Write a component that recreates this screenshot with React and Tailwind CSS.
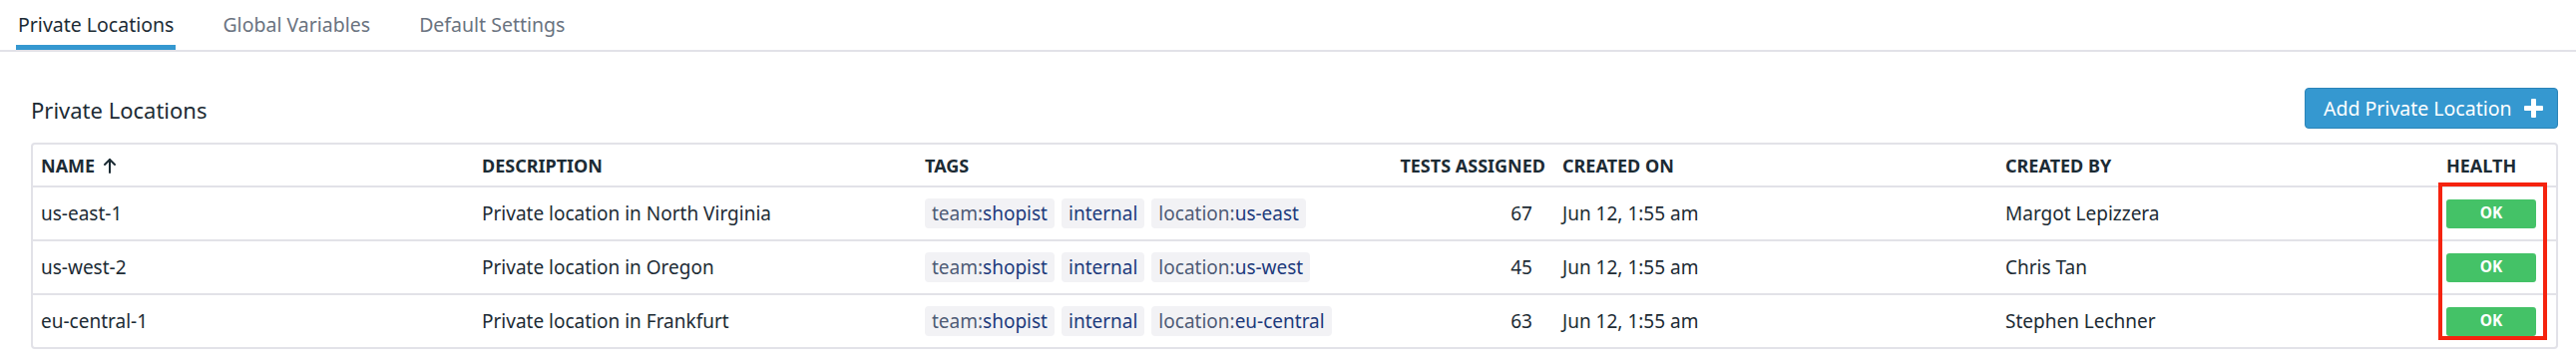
import React from 'react';

const rows = [
  {
    name: 'us-east-1',
    description: 'Private location in North Virginia',
    region: 'us-east',
    tests: 67,
    createdOn: 'Jun 12, 1:55 am',
    createdBy: 'Margot Lepizzera'
  },
  {
    name: 'us-west-2',
    description: 'Private location in Oregon',
    region: 'us-west',
    tests: 45,
    createdOn: 'Jun 12, 1:55 am',
    createdBy: 'Chris Tan'
  },
  {
    name: 'eu-central-1',
    description: 'Private location in Frankfurt',
    region: 'eu-central',
    tests: 63,
    createdOn: 'Jun 12, 1:55 am',
    createdBy: 'Stephen Lechner'
  }
];

const gridCols = 'grid grid-cols-[442px_444px_471px_168px_444px_442px_118px]';

function Tag({ k, v }) {
  return (
    <span className="inline-flex items-center h-[30px] px-[7px] rounded-[4px] bg-[#f2f2f5] text-[19px] leading-none">
      {k && <span className="text-[#4f5c76]">{k}:</span>}
      <span className="text-[#1d3a7c]">{v}</span>
    </span>
  );
}

function PlusIcon() {
  return (
    <svg width="19" height="19" viewBox="0 0 19 19" fill="#ffffff">
      <rect x="7" y="0" width="5" height="19" rx="1" />
      <rect x="0" y="7" width="19" height="5" rx="1" />
    </svg>
  );
}

function SortArrow() {
  return (
    <svg width="14" height="16" viewBox="0 0 14 16" fill="none" stroke="#1c2b34" strokeWidth="2" strokeLinecap="round" strokeLinejoin="round">
      <path d="M7 15V2" />
      <path d="M2 7l5-5 5 5" />
    </svg>
  );
}

function App() {
  return (
    <div className="w-[2582px] h-[362px] bg-white font-['Noto_Sans',sans-serif] text-[#1c2b34] overflow-hidden">
      {/* Tabs */}
      <div className="flex pl-[16px] border-b-2 border-[#e2e2e8]">
        <div className="h-[50px] px-[2px] flex items-center border-b-[5px] border-[#3598d0] pt-[5px] text-[19.5px] text-[#1c2b34]">
          Private Locations
        </div>
        <div className="h-[50px] px-[2px] ml-[45px] flex items-center border-b-[5px] border-transparent pt-[5px] text-[19.5px] text-[#6a7380]">
          Global Variables
        </div>
        <div className="h-[50px] px-[2px] ml-[45px] flex items-center border-b-[5px] border-transparent pt-[5px] text-[19.5px] text-[#6a7380]">
          Default Settings
        </div>
      </div>

      <div className="pl-[31px] pr-[18px]">
        {/* Header row */}
        <div className="flex items-center justify-between mt-[36px]">
          <h2 className="text-[22px] leading-none text-[#1c2b34] pt-[3px]">Private Locations</h2>
          <button className="flex items-center gap-[12px] h-[41px] w-[254px] pl-[18px] bg-[#3598d0] border border-[#2b84b8] rounded-[4px] text-white text-[19.5px] leading-none">
            Add Private Location
            <PlusIcon />
          </button>
        </div>

        {/* Table */}
        <div className="relative mt-[14px] border-2 border-[#e2e2e8] rounded-[4px]">
          <div className={`${gridCols} h-[41px] items-center text-[18px] font-bold uppercase leading-none`}>
            <div className="pl-[8px] flex items-center gap-[8px]">
              Name <SortArrow />
            </div>
            <div className="pl-[8px]">Description</div>
            <div className="pl-[8px]">Tags</div>
            <div className="pr-[9px] text-right">Tests Assigned</div>
            <div className="pl-[8px]">Created On</div>
            <div className="pl-[8px]">Created By</div>
            <div className="pl-[8px]">Health</div>
          </div>

          {rows.map(row => (
            <div
              key={row.name}
              className={`${gridCols} h-[54px] items-center border-t-2 border-[#e2e2e8] text-[19px] leading-none`}
            >
              <div className="pl-[8px]">{row.name}</div>
              <div className="pl-[8px]">{row.description}</div>
              <div className="pl-[8px] flex items-center gap-[7px]">
                <Tag k="team" v="shopist" />
                <Tag v="internal" />
                <Tag k="location" v={row.region} />
              </div>
              <div className="pr-[22px] text-right">{row.tests}</div>
              <div className="pl-[8px]">{row.createdOn}</div>
              <div className="pl-[8px]">{row.createdBy}</div>
              <div className="pl-[8px]">
                <span className="flex items-center justify-center w-[90px] h-[29px] rounded-[3px] bg-[#44c267] text-white text-[15.5px] font-bold leading-none">
                  OK
                </span>
              </div>
            </div>
          ))}

          {/* annotation box */}
          <div className="absolute left-[2411px] top-[38px] w-[109px] h-[158px] border-[4px] border-[#f5230f] pointer-events-none" />
        </div>
      </div>
    </div>
  );
}

export default App;
